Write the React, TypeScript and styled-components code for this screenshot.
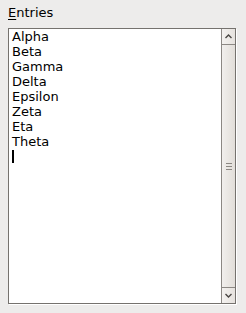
import React from 'react'
import styled, { createGlobalStyle } from 'styled-components'

const GlobalStyle = createGlobalStyle`
  html, body {
    margin: 0;
    padding: 0;
    background: #edeceb;
  }
  body {
    font-family: "DejaVu Sans", "Liberation Sans", sans-serif;
    font-size: 13px;
    color: #000;
  }
`

const Panel = styled.div`
  display: flex;
  flex-direction: column;
  width: 246px;
  height: 313px;
  padding: 5px 10px 9px 8px;
  box-sizing: border-box;
  gap: 4px;
`

const Label = styled.div`
  line-height: 16px;
  height: 19px;
  color: #000;

  u {
    text-decoration: underline;
    text-underline-offset: 2px;
  }
`

const Box = styled.div`
  flex: 1;
  display: flex;
  border: 1px solid #75726e;
  box-shadow: 1px 1px 0 #fff;
  background: #fff;
  min-height: 0;
`

const Lines = styled.div`
  flex: 1;
  padding: 0 3px;
  line-height: 15px;
  color: #000;
`

const Caret = styled.div`
  width: 2px;
  height: 13px;
  margin-top: 1px;
  background: #000;
`

const Scrollbar = styled.div`
  width: 13px;
  display: flex;
  flex-direction: column;
  border-left: 1px solid #8c8884;
  background: linear-gradient(to right, #f1efed, #e2ded9);
`

const ArrowButton = styled.div<{ $bottom?: boolean }>`
  height: 15px;
  display: flex;
  align-items: center;
  justify-content: center;
  background: linear-gradient(to right, #f4f2f0, #e6e2de);
  border-top: ${p => (p.$bottom ? '1px solid #8c8884' : 'none')};
  border-bottom: ${p => (p.$bottom ? 'none' : '1px solid #8c8884')};
`

const Track = styled.div`
  flex: 1;
  display: flex;
  align-items: center;
  justify-content: center;
`

const Grip = styled.div`
  width: 6px;
  display: flex;
  flex-direction: column;
  gap: 2px;

  span {
    display: block;
    height: 1px;
    background: #8b8782;
  }
`

const Chevron = ({ up }: { up?: boolean }) => (
  <svg width="7" height="5" viewBox="0 0 7 5">
    <path
      d={up ? 'M0.5 4 L3.5 1 L6.5 4' : 'M0.5 1 L3.5 4 L6.5 1'}
      fill="none"
      stroke="#4a4744"
      strokeWidth="1.4"
    />
  </svg>
)

const entries = ['Alpha', 'Beta', 'Gamma', 'Delta', 'Epsilon', 'Zeta', 'Eta', 'Theta']

export default function App() {
  return (
    <>
      <GlobalStyle />
      <Panel>
        <Label>
          <u>E</u>ntries
        </Label>
        <Box>
          <Lines>
            {entries.map(e => (
              <div key={e}>{e}</div>
            ))}
            <Caret />
          </Lines>
          <Scrollbar>
            <ArrowButton>
              <Chevron up />
            </ArrowButton>
            <Track>
              <Grip>
                <span />
                <span />
                <span />
              </Grip>
            </Track>
            <ArrowButton $bottom>
              <Chevron />
            </ArrowButton>
          </Scrollbar>
        </Box>
      </Panel>
    </>
  )
}
